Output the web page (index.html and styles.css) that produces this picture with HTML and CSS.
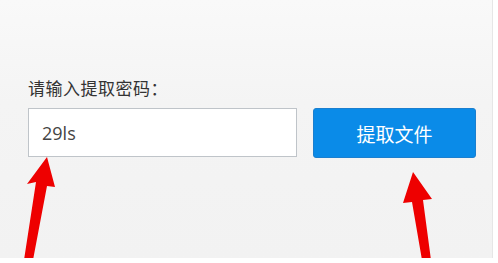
FILE: index.html
```html
<!DOCTYPE html>
<html lang="zh-CN">
<head>
<meta charset="utf-8">
<link rel="stylesheet" href="styles.css">
</head>
<body>
<div class="screen">
  <div class="label">请输入提取密码：</div>
  <div class="row">
    <div class="input">29ls</div>
    <div class="btn">提取文件</div>
  </div>
  <svg class="arrows" width="494" height="258" viewBox="0 0 494 258">
    <polygon fill="#ee0000" points="47,157 55,187 47,186 33,260 24,260 36,182 27,184"/>
    <polygon fill="#ee0000" points="413,172 432,199 423,200 431,260 422,260 412,202 403,203"/>
  </svg>
</div>
</body>
</html>
```
FILE: styles.css
```css
html, body {
  margin: 0;
  padding: 0;
  background: #ffffff;
}
body {
  width: 498px;
  height: 263px;
  overflow: hidden;
  font-family: "Noto Sans CJK SC", "Liberation Sans", sans-serif;
}
.screen {
  position: relative;
  width: 493px;
  height: 258px;
  box-sizing: border-box;
  padding: 77px 0 0 28px;
  background: linear-gradient(#f9f9f9 0%, #f4f4f4 40%, #f2f2f2 100%);
  border-right: 1px solid #e6e6e6;
  overflow: hidden;
}
.label {
  font-size: 17px;
  line-height: 22px;
  color: #333333;
  letter-spacing: 0.5px;
}
.row {
  display: flex;
  gap: 16px;
  margin-top: 9px;
  align-items: flex-start;
}
.input {
  box-sizing: border-box;
  width: 269px;
  height: 49px;
  border: 1px solid #bfc4c9;
  background: #ffffff;
  padding-left: 13px;
  display: flex;
  align-items: center;
  font-family: "Open Sans", "Liberation Sans", sans-serif;
  font-size: 18px;
  color: #444444;
}
.btn {
  box-sizing: border-box;
  width: 163px;
  height: 50px;
  background: #0a8be8;
  border: 1px solid #1b7fcf;
  border-radius: 3px;
  color: #ffffff;
  font-size: 19px;
  display: flex;
  align-items: center;
  justify-content: center;
}
.arrows {
  position: absolute;
  left: 0;
  top: 0;
}
```
